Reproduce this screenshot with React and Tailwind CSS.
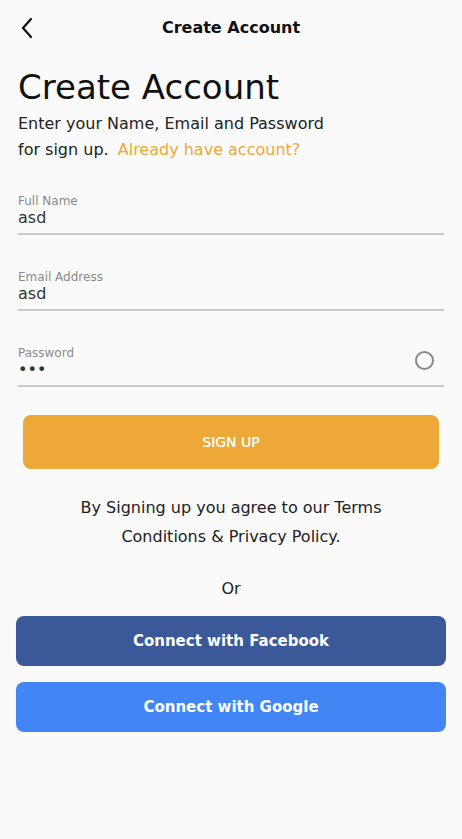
import React from 'react';

const Field = ({ label, value, secure }) => (
  <div className="flex items-end border-b-2 border-[#c9c9c9] pb-[6px]">
    <div className="flex-1">
      <div className="text-[12px] leading-[14px] text-[#8a8a8a]">{label}</div>
      <div className="text-[16px] leading-[19px] text-[#333]">{value}</div>
    </div>
    {secure && (
      <div className="mb-[9px] mr-[10px] h-[19px] w-[19px] rounded-full border-2 border-[#8a8a8a]" />
    )}
  </div>
);

const App = () => {
  return (
    <div className="min-h-[839px] w-[462px] bg-[#fafafa] font-['DejaVu_Sans',sans-serif] text-[#111]">
      {/* header */}
      <div className="relative flex h-[56px] items-center justify-center">
        <button className="absolute left-[18px] top-[16px]">
          <svg width="20" height="24" viewBox="0 0 20 24" fill="none" stroke="#111" strokeWidth="2.2" strokeLinecap="round">
            <path d="M13 3 L5 12 L13 21" />
          </svg>
        </button>
        <h1 className="text-[16px] font-bold">Create Account</h1>
      </div>

      <div className="px-[18px]">
        <h2 className="mt-[11px] text-[34px] leading-[40px]">Create Account</h2>
        <p className="mt-[4px] text-[16px] leading-[26px] text-[#222]">
          Enter your Name, Email and Password
          <br />
          for sign up.{' '}
          <span className="ml-[4px] text-[#eea837]">Already have account?</span>
        </p>

        <div className="mt-[31px] flex flex-col gap-[35px]">
          <Field label="Full Name" value="asd" />
          <Field label="Email Address" value="asd" />
          <Field label="Password" value="•••" secure />
        </div>
      </div>

      <div className="mt-[28px] px-[23px]">
        <button className="flex h-[54px] w-full items-center justify-center rounded-[8px] bg-[#eea837] text-[14px] font-medium text-white [text-shadow:0_0_0.4px_#fff]">
          SIGN UP
        </button>
      </div>

      <p className="mt-[24px] text-center text-[16px] leading-[29px] text-[#222]">
        By Signing up you agree to our Terms
        <br />
        Conditions &amp; Privacy Policy.
      </p>

      <p className="mt-[27px] text-center text-[16px] leading-[22px] text-[#222]">Or</p>

      <div className="mt-[16px] flex flex-col gap-[16px] px-[16px]">
        <button className="flex h-[50px] w-full items-center justify-center rounded-[8px] bg-[#3b5998] text-[15px] font-bold text-white">
          Connect with Facebook
        </button>
        <button className="flex h-[50px] w-full items-center justify-center rounded-[8px] bg-[#4286f5] text-[15px] font-bold text-white">
          Connect with Google
        </button>
      </div>
    </div>
  );
};

export default App;
